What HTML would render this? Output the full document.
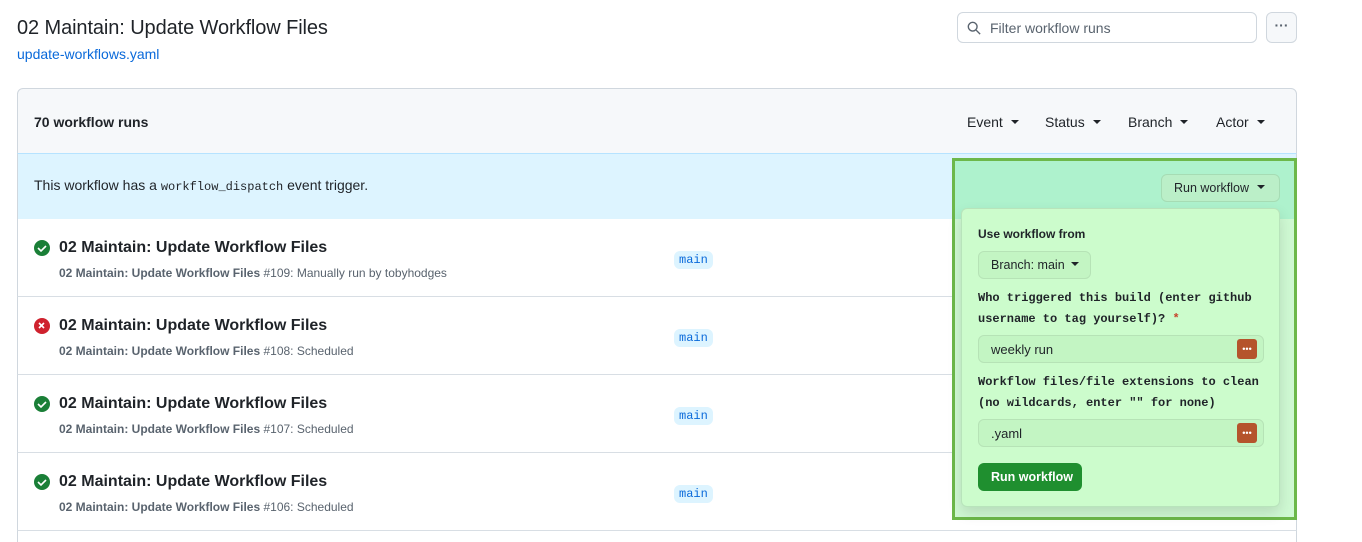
<!DOCTYPE html>
<html><head><meta charset="utf-8"><style>
*{box-sizing:border-box;margin:0;padding:0}
body{width:1362px;height:542px;background:#fff;font-family:"Liberation Sans",sans-serif;color:#1f2328;position:relative;overflow:hidden}
.abs{position:absolute}
.mono{font-family:"Liberation Mono",monospace}
.row{position:absolute;left:17px;width:1280px;height:78px;border-left:1px solid #d0d7de;border-right:1px solid #d0d7de;border-bottom:1px solid #d8dee4;background:#fff}
.row .t{position:absolute;left:41px;top:20px;font-size:16px;font-weight:600}
.row .s{position:absolute;left:41px;top:47px;font-size:12px;color:#59636e}
.row .s b{font-weight:700}
.row .ic{position:absolute;left:16px;top:21px;width:16px;height:16px;border-radius:50%}
.br{position:absolute;left:656px;top:32px;background:#ddf4ff;color:#0969da;font-size:12px;padding:2px 5px;border-radius:6px}
.dd{font-size:14px;position:absolute;top:25px}
.dd:after{content:"";display:inline-block;margin-left:8px;border:4px solid transparent;border-top-color:#1f2328;vertical-align:-1px}
.lbl{font-family:"Liberation Mono",monospace;font-weight:700;font-size:12px;color:#1f2328;line-height:21px}
.inp{position:absolute;left:16px;width:286px;height:28px;border:1px solid #b6e3b6;border-radius:6px;background:#c3f5c3;font-size:13px;padding:6px 12px}
.dots{position:absolute;right:6px;top:3px;width:20px;height:20px;background:#b5542c;border-radius:3px;color:#fff;font-size:9px;text-align:center;line-height:20px}
</style></head><body>
<div class="abs" style="left:17px;top:17px;font-size:20px;letter-spacing:-0.1px">02 Maintain: Update Workflow Files</div>
<div class="abs" style="left:17px;top:46px;font-size:14px;color:#0969da">update-workflows.yaml</div>
<div class="abs" style="left:957px;top:12px;width:300px;height:31px;border:1px solid #d0d7de;border-radius:6px;font-size:14px;color:#59636e;padding:7px 0 0 32px">Filter workflow runs
<svg class="abs" style="left:9px;top:8px" width="14" height="14" viewBox="0 0 16 16"><circle cx="6.5" cy="6.5" r="5" fill="none" stroke="#59636e" stroke-width="1.6"/><path d="M10.5 10.5L15 15" stroke="#59636e" stroke-width="1.6"/></svg></div>
<div class="abs" style="left:1266px;top:12px;width:31px;height:31px;border:1px solid #d0d7de;border-radius:6px;background:#f6f8fa;text-align:center;font-size:14px;line-height:24px;color:#59636e;font-weight:700">···</div>

<div class="abs" style="left:17px;top:88px;width:1280px;height:66px;background:#f6f8fa;border:1px solid #d0d7de;border-radius:6px 6px 0 0">
<div class="abs" style="left:16px;top:25px;font-size:14px;font-weight:700">70 workflow runs</div>
<div class="dd" style="left:949px">Event</div>
<div class="dd" style="left:1027px">Status</div>
<div class="dd" style="left:1110px">Branch</div>
<div class="dd" style="left:1198px">Actor</div>
</div>
<div class="abs" style="left:17px;top:153px;width:1280px;height:67px;background:#ddf4ff;border:1px solid #d0d7de;border-top:1px solid #b6e3ff">
<div class="abs" style="left:16px;top:23px;font-size:14px">This workflow has a <span class="mono" style="font-size:12px">workflow_dispatch</span> event trigger.</div>
</div>

<div class="row" style="top:219px"><div class="ic" style="background:#1a7f37"></div><div class="t">02 Maintain: Update Workflow Files</div><div class="s"><b>02 Maintain: Update Workflow Files</b> #109: Manually run by tobyhodges</div><div class="br mono">main</div></div>
<div class="row" style="top:297px"><div class="ic" style="background:#cf222e"></div><div class="t">02 Maintain: Update Workflow Files</div><div class="s"><b>02 Maintain: Update Workflow Files</b> #108: Scheduled</div><div class="br mono">main</div></div>
<div class="row" style="top:375px"><div class="ic" style="background:#1a7f37"></div><div class="t">02 Maintain: Update Workflow Files</div><div class="s"><b>02 Maintain: Update Workflow Files</b> #107: Scheduled</div><div class="br mono">main</div></div>
<div class="row" style="top:453px"><div class="ic" style="background:#1a7f37"></div><div class="t">02 Maintain: Update Workflow Files</div><div class="s"><b>02 Maintain: Update Workflow Files</b> #106: Scheduled</div><div class="br mono">main</div></div>
<div class="abs" style="left:17px;top:531px;width:1280px;height:11px;border-left:1px solid #d0d7de;border-right:1px solid #d0d7de"></div>

<svg class="abs" style="left:0;top:0" width="1362" height="542">
<g fill="none" stroke="#fff" stroke-width="1.6"><path d="M38 248l3 3 5-5"/><path d="M39 323l5 5M44 323l-5 5"/><path d="M38 404l3 3 5-5"/><path d="M38 482l3 3 5-5"/></g></svg>

<div class="abs" style="left:952px;top:158px;width:345px;height:362px;border:3px solid #6cb84a;background:#cff9d3">
<div class="abs" style="left:0;top:0;width:339px;height:58px;background:#aef2cd"></div>
<div class="abs" style="left:206px;top:13px;width:119px;height:28px;border:1px solid #a6dcb4;border-radius:6px;background:#bbefc8;font-size:12.5px;padding:6px 0 0 12px">Run workflow<span style="display:inline-block;margin-left:8px;border:4px solid transparent;border-top-color:#1f2328;vertical-align:-1px"></span></div>
<div class="abs" style="left:6px;top:47px;width:319px;height:299px;background:#ccfccc;border:1px solid #b8e4bb;border-radius:6px;box-shadow:0 6px 14px rgba(0,0,0,.12)">
<div class="abs" style="left:16px;top:18px;font-size:12px;font-weight:700">Use workflow from</div>
<div class="abs" style="left:16px;top:42px;width:113px;height:28px;border:1px solid #b6e3b6;border-radius:6px;background:#c3f5c3;font-size:12.5px;padding:6px 0 0 12px">Branch: main<span style="display:inline-block;margin-left:6px;border:4px solid transparent;border-top-color:#1f2328;vertical-align:-1px"></span></div>
<div class="abs lbl" style="left:16px;top:79px">Who triggered this build (enter github<br>username to tag yourself)? <span style="color:#c5442a">*</span></div>
<div class="inp" style="top:126px">weekly run<div class="dots">•••</div></div>
<div class="abs lbl" style="left:16px;top:163px">Workflow files/file extensions to clean<br>(no wildcards, enter "" for none)</div>
<div class="inp" style="top:210px">.yaml<div class="dots">•••</div></div>
<div class="abs" style="left:16px;top:254px;width:104px;height:28px;background:#1f8f2f;border-radius:6px;color:#fff;font-size:12.5px;font-weight:600;padding:7px 0 0 13px">Run workflow</div>
</div>
</div>
</body></html>
